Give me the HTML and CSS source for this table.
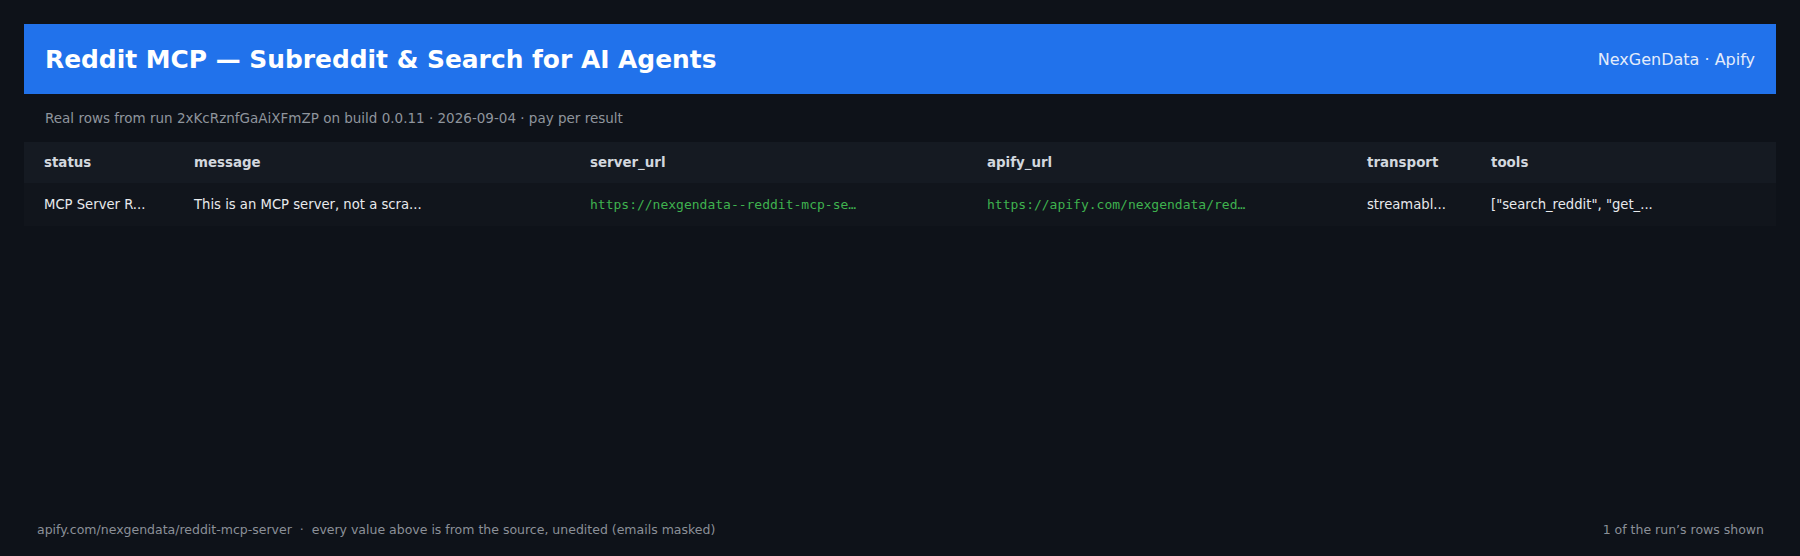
FILE: index.html
```html
<!DOCTYPE html>
<html lang="en">
<head>
<meta charset="utf-8">
<title>Reddit MCP</title>
<link rel="stylesheet" href="styles.css">
</head>
<body>
<div class="page">
  <header class="banner">
    <h1 class="title">Reddit MCP — Subreddit &amp; Search for AI Agents</h1>
    <div class="brand">NexGenData · Apify</div>
  </header>
  <p class="sub">Real rows from run 2xKcRznfGaAiXFmZP on build 0.0.11 · 2026-09-04 · pay per result</p>
  <div class="table">
    <div class="row head">
      <div class="cell">status</div>
      <div class="cell">message</div>
      <div class="cell">server_url</div>
      <div class="cell">apify_url</div>
      <div class="cell">transport</div>
      <div class="cell">tools</div>
    </div>
    <div class="row data">
      <div class="cell">MCP Server R...</div>
      <div class="cell">This is an MCP server, not a scra...</div>
      <div class="cell mono">https://nexgendata--reddit-mcp-se…</div>
      <div class="cell mono">https://apify.com/nexgendata/red…</div>
      <div class="cell">streamabl...</div>
      <div class="cell">["search_reddit", "get_...</div>
    </div>
  </div>
  <footer class="foot">
    <span>apify.com/nexgendata/reddit-mcp-server &nbsp;·&nbsp; every value above is from the source, unedited (emails masked)</span>
    <span>1 of the run’s rows shown</span>
  </footer>
</div>
</body>
</html>
```
FILE: styles.css
```css
* { box-sizing: border-box; }
html, body { margin: 0; padding: 0; }
body {
  background: #0e1219;
  color: #e6e8eb;
  font-family: "DejaVu Sans", sans-serif;
  height: 556px;
  overflow: hidden;
}
.page {
  height: 556px;
  padding: 24px 24px 0;
  display: flex;
  flex-direction: column;
}
.banner {
  height: 70px;
  background: #2172eb;
  display: flex;
  align-items: center;
  justify-content: space-between;
  padding: 0 21px 0 21px;
}
.title {
  margin: 0;
  font-size: 24.9px;
  font-weight: 700;
  color: #ffffff;
}
.brand {
  font-size: 16px;
  color: #e3ecfb;
}
.sub {
  margin: 0;
  height: 48px;
  display: flex;
  align-items: center;
  padding-left: 21px;
  font-size: 13.5px;
  color: #8f959d;
}
.table {
  display: flex;
  flex-direction: column;
}
.row {
  display: grid;
  grid-template-columns: 150px 396px 397px 380px 124px 1fr;
  align-items: center;
}
.row.head {
  height: 41px;
  background: #151a22;
  font-weight: 700;
  color: #d2d7de;
}
.row.head .cell {
  font-size: 13.4px;
}
.row.data {
  height: 43px;
  background: #11151c;
  color: #e8eaed;
}
.cell {
  padding: 0 20px;
  font-size: 13.2px;
  white-space: nowrap;
  overflow: hidden;
}
.cell.mono {
  font-family: "DejaVu Sans Mono", monospace;
  font-size: 13px;
  color: #3fb24f;
}
.foot {
  margin-top: auto;
  height: 50px;
  padding: 0 12px 3px 13px;
  display: flex;
  justify-content: space-between;
  align-items: center;
  font-size: 12.5px;
  color: #8b9098;
}
```
